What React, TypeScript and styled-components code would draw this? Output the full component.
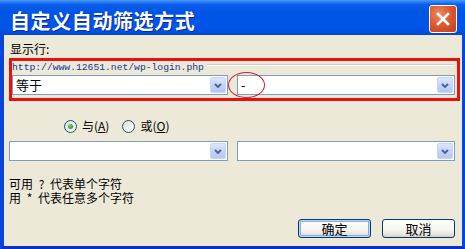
import React from "react";
import styled, { createGlobalStyle } from "styled-components";

const uiFont = `"Noto Sans CJK SC", "Noto Sans", sans-serif`;

const GlobalStyle = createGlobalStyle`
html, body {
    margin: 0;
    padding: 0;
    overflow: hidden;
    background: #ECE9D8;
}
* {
    box-sizing: border-box;
}
`;

const Window = styled.div`
width: 465px;
height: 249px;
display: flex;
flex-direction: column;
font-family: ${uiFont};
font-size: 12px;
color: #000;
`;

const TitleBar = styled.div`
height: 35px;
flex: none;
display: flex;
align-items: flex-start;
justify-content: space-between;
padding: 0 8px 0 10px;
background: linear-gradient(to bottom, #3B8CF5 0%, #0B5EEC 10%, #0054E3 35%, #0055E8 80%, #0049D4 100%);
border-top: 1px solid #3F93FF;
`;

const Title = styled.span`
margin-top: 10px;
font-size: 20px;
line-height: 20px;
font-weight: 700;
letter-spacing: 0.6px;
color: #fff;
text-shadow: 1px 1px 0 #0A2A9A;
white-space: nowrap;
`;

const CloseButton = styled.div`
margin-top: 4px;
width: 28px;
height: 28px;
border: 1px solid #fff;
border-radius: 3px;
background: radial-gradient(circle at 35% 30%, #F08A62 0%, #DE5A32 45%, #C43C18 100%);
display: flex;
align-items: center;
justify-content: center;
`;

const Frame = styled.div`
flex: 1;
display: flex;
flex-direction: column;
background: #ECE9D8;
border-left: 4px solid #0845DA;
border-right: 3px solid #0845DA;
border-bottom: 3px solid #0831C8;
padding: 7px 0 0 5px;
`;

const Label = styled.div`
line-height: 14px;
height: 14px;
padding-left: 1px;
`;

const Highlight = styled.div`
position: relative;
margin-top: 2px;
width: 451px;
height: 43px;
border: 3px solid #E61212;
padding: 0 2px 0 0;
display: flex;
flex-direction: column;
`;

const Legend = styled.div`
height: 14px;
display: flex;
align-items: flex-start;
`;

const Url = styled.span`
font-family: "Liberation Mono", "DejaVu Sans Mono", monospace;
font-size: 9.7px;
line-height: 12px;
margin-top: 1px;
color: #1A3590;
white-space: nowrap;
`;

const GroupLine = styled.span`
flex: 1;
margin: 3px 0 0 3px;
border-top: 1px solid #D0D0BF;
border-bottom: 1px solid #fff;
`;

const ComboRow = styled.div<{ $top?: number }>`
display: flex;
gap: 9px;
margin-top: ${p => p.$top ?? 0}px;
`;

const Combo = styled.div<{ $width: number }>`
width: ${p => p.$width}px;
height: 20px;
border: 1px solid #7F9DB9;
background: #fff;
display: flex;
align-items: center;
`;

const ComboText = styled.span`
flex: 1;
padding-left: 3px;
font-size: 13px;
line-height: 18px;
white-space: nowrap;
overflow: hidden;
`;

const DropButton = styled.span`
width: 16px;
height: 16px;
margin: 1px;
border: 1px solid #C6D5FB;
border-radius: 2px;
background: linear-gradient(to bottom, #DCE6FD 0%, #C3D4FB 50%, #B3C8F5 100%);
display: flex;
align-items: center;
justify-content: center;
`;

const Ellipse = styled.div`
position: absolute;
left: 216px;
top: 11px;
width: 37px;
height: 26px;
border: 1px solid #C4203C;
border-radius: 50%;
pointer-events: none;
`;

const RadioRow = styled.div`
margin-top: 18px;
height: 14px;
display: flex;
align-items: center;
padding-left: 55px;
gap: 13px;
`;

const RadioItem = styled.label`
display: flex;
align-items: center;
gap: 5px;
line-height: 14px;
`;

const RadioCircle = styled.span<{ $checked?: boolean }>`
width: 13px;
height: 13px;
border-radius: 50%;
border: 1px solid #1C5180;
background: linear-gradient(135deg, #DCDCD5 0%, #F4F4F0 60%, #fff 100%);
display: flex;
align-items: center;
justify-content: center;

&::after {
    content: "";
    display: ${p => p.$checked ? "block" : "none"};
    width: 5px;
    height: 5px;
    border-radius: 50%;
    background: radial-gradient(circle at 35% 35%, #7BD37B, #21A121 70%);
}
`;

const Hint = styled.div`
margin-top: 16px;
line-height: 14px;
white-space: pre;
word-spacing: 3px;
`;

const ButtonRow = styled.div`
margin-top: 14px;
display: flex;
justify-content: flex-end;
gap: 11px;
padding-right: 7px;
`;

const DialogButton = styled.button<{ $default?: boolean }>`
width: 73px;
height: 19px;
padding: 0;
font-family: ${uiFont};
font-size: 13px;
line-height: 15px;
color: #000;
border: 1px solid #003C74;
border-radius: 3px;
background: linear-gradient(to bottom, #FFFFFF 0%, #F5F4EF 60%, #E3E0D5 90%, #D6D0C5 100%);
box-shadow: ${p => p.$default
    ? "inset 0 0 0 1px #BCD4F6, inset 0 0 0 2px #89ADE4"
    : "inset 0 -1px 0 #D6D0C5"};
`;

const Chevron = () => (
    <svg width="8" height="5" viewBox="0 0 8 5">
        <path d="M1 1 L4 4 L7 1" fill="none" stroke="#4D6185" strokeWidth="1.8" />
    </svg>
);

const CloseIcon = () => (
    <svg width="14" height="14" viewBox="0 0 14 14">
        <path d="M2 2 L12 12 M12 2 L2 12" stroke="#fff" strokeWidth="2.6" strokeLinecap="square" />
    </svg>
);

const ComboBox = ({ width, value }: { width: number, value?: string }) => (
    <Combo $width={width}>
        <ComboText>{value}</ComboText>
        <DropButton><Chevron /></DropButton>
    </Combo>
);

export default function App() {
    return (
        <>
            <GlobalStyle />
            <Window>
                <TitleBar>
                    <Title>自定义自动筛选方式</Title>
                    <CloseButton><CloseIcon /></CloseButton>
                </TitleBar>
                <Frame>
                    <Label>显示行:</Label>
                    <Highlight>
                        <Legend>
                            <Url>http://www.12651.net/wp-login.php</Url>
                            <GroupLine />
                        </Legend>
                        <ComboRow>
                            <ComboBox width={216} value="等于" />
                            <ComboBox width={218} value="-" />
                        </ComboRow>
                        <Ellipse />
                    </Highlight>
                    <RadioRow>
                        <RadioItem><RadioCircle $checked /><span>与(<u>A</u>)</span></RadioItem>
                        <RadioItem><RadioCircle /><span>或(<u>O</u>)</span></RadioItem>
                    </RadioRow>
                    <ComboRow $top={8}>
                        <ComboBox width={219} />
                        <ComboBox width={218} />
                    </ComboRow>
                    <Hint>{"可用 ? 代表单个字符\n用 * 代表任意多个字符"}</Hint>
                    <ButtonRow>
                        <DialogButton $default>确定</DialogButton>
                        <DialogButton>取消</DialogButton>
                    </ButtonRow>
                </Frame>
            </Window>
        </>
    );
}
